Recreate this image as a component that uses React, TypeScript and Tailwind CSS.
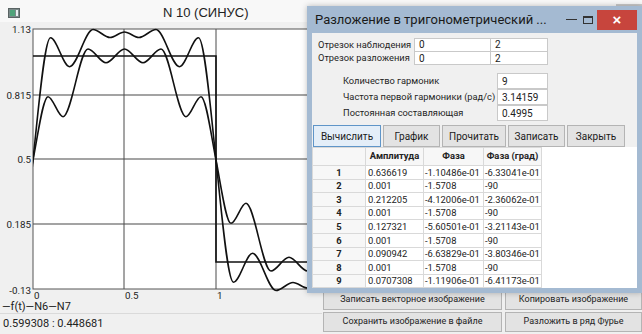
import React from 'react'

type Pt = [number, number, number?]

// monotone cubic through the points, optional tangent multiplier as 3rd value
function smoothPath(pts: Pt[]) {
  const n = pts.length
  const h: number[] = []
  const d: number[] = []
  for (let i = 0; i < n - 1; i++) {
    h[i] = pts[i + 1][0] - pts[i][0]
    d[i] = (pts[i + 1][1] - pts[i][1]) / h[i]
  }
  const m: number[] = []
  for (let i = 0; i < n; i++) {
    if (i === 0) m[i] = d[0]
    else if (i === n - 1) m[i] = d[n - 2]
    else if (d[i - 1] * d[i] <= 0) m[i] = 0
    else {
      const w1 = 2 * h[i] + h[i - 1]
      const w2 = h[i] + 2 * h[i - 1]
      m[i] = (w1 + w2) / (w1 / d[i - 1] + w2 / d[i])
    }
    m[i] *= pts[i][2] ?? 1
  }
  let s = `M${pts[0][0]},${pts[0][1]}`
  for (let i = 0; i < n - 1; i++) {
    const [x0, y0] = pts[i]
    const [x1, y1] = pts[i + 1]
    s += ` C${x0 + h[i] / 3},${y0 + (m[i] * h[i]) / 3} ${x1 - h[i] / 3},${y1 - (m[i + 1] * h[i]) / 3} ${x1},${y1}`
  }
  return s
}

// half period (t from 0 to 1) -> mirrored on both sides around the zero crossings
function extend(half: Pt[]): Pt[] {
  const left = half
    .slice(1, 4)
    .reverse()
    .map(([x, y, k]) => [66 - x, 320 - y, k] as Pt)
  const right = half
    .slice(0, -1)
    .reverse()
    .map(([x, y, k]) => [432 - x, 320 - y, k] as Pt)
  return [...left, ...half, ...right]
}

const N7: Pt[] = [
  [33, 160, 1.35],
  [50.5, 37.8],
  [69.5, 66.7],
  [93, 29.5],
  [110, 37.5],
  [124.5, 32],
  [139, 37.5],
  [156, 29.5],
  [179.5, 66.7],
  [198.5, 37.8],
  [216, 160, 1.35],
]

const N6: Pt[] = [
  [33, 160, 1.2],
  [48, 96.7],
  [63, 116.7],
  [88, 49],
  [106, 62.7],
  [124.5, 49],
  [143, 62.7],
  [161, 49],
  [186, 116.7],
  [201, 96.7],
  [216, 160, 1.2],
]

const yLabels = [
  { y: 29, t: '1.13' },
  { y: 95, t: '0.815' },
  { y: 159, t: '0.5' },
  { y: 224, t: '0.185' },
  { y: 290, t: '-0.13' },
]

const rows = [
  ['1', '0.636619', '-1.10486e-01', '-6.33041e-01'],
  ['2', '0.001', '-1.5708', '-90'],
  ['3', '0.212205', '-4.12006e-01', '-2.36062e-01'],
  ['4', '0.001', '-1.5708', '-90'],
  ['5', '0.127321', '-5.60501e-01', '-3.21143e-01'],
  ['6', '0.001', '-1.5708', '-90'],
  ['7', '0.090942', '-6.63829e-01', '-3.80346e-01'],
  ['8', '0.001', '-1.5708', '-90'],
  ['9', '0.0707308', '-1.11906e-01', '-6.41173e-01'],
]

function Chart() {
  return (
    <svg viewBox="0 22 322 279" className="block h-[279px] w-[322px] shrink-0">
      <defs>
        <clipPath id="plot">
          <rect x="33" y="28" width="300" height="264" />
        </clipPath>
      </defs>
      <rect x="33" y="29" width="300" height="260" fill="#ffffff" />
      {[95, 159, 224].map((y) => (
        <line key={y} x1="33" x2="333" y1={y} y2={y} stroke="#858585" strokeWidth="1.4" />
      ))}
      {[124, 216].map((x) => (
        <line key={x} x1={x} x2={x} y1="29" y2="289" stroke="#4a4a4a" strokeWidth="1" />
      ))}
      <rect x="33" y="29" width="300" height="260" fill="none" stroke="#555" strokeWidth="1" />
      <g clipPath="url(#plot)" fill="none" stroke="#111" strokeWidth="1.6">
        <path d="M33,56 H216 V262 H333" />
        <path d={smoothPath(extend(N7))} />
        <path d={smoothPath(extend(N6))} />
      </g>
      <g fontFamily="Roboto, sans-serif" fontSize="9.8" fill="#222">
        {yLabels.map((l) => (
          <text key={l.t} x="31" y={l.y + 3.5} textAnchor="end">
            {l.t}
          </text>
        ))}
        <text x="34" y="299">0</text>
        <text x="125" y="299">0.5</text>
        <text x="217" y="299">1</text>
      </g>
    </svg>
  )
}

function Field({ value, className }: { value: string; className: string }) {
  return (
    <div className={`flex items-center border border-[#c9c9c9] bg-white pl-[4px] text-[10px] text-[#222] ${className}`}>
      {value}
    </div>
  )
}

function Btn({ label, active }: { label: string; active?: boolean }) {
  return (
    <div
      className={`flex h-[22px] items-center justify-center whitespace-nowrap border text-[10px] text-[#1b1b1b] ${
        active ? 'border-[#5f95c8] bg-[#e4eef8]' : 'border-[#b4b4b4] bg-[#e3e3e3]'
      }`}
    >
      {label}
    </div>
  )
}

function Dialog() {
  return (
    <div className="absolute left-[307px] top-[6px] flex h-[287px] w-[335px] flex-col bg-[#a4bad2] px-[5px] pb-[5px] shadow-[0_0_6px_rgba(0,0,0,0.25)]">
      <div className="flex h-[27px] shrink-0 items-center">
        <span className="ml-[3px] whitespace-nowrap text-[13px] text-[#1a1a1a]">Разложение в тригонометрический ...</span>
        <div className="ml-auto flex items-center">
          <div className="mr-[6px] h-[1px] w-[11px] bg-[#333]" />
          <div className="mr-[4px] h-[8px] w-[10px] border border-t-[2px] border-[#333]" />
          <div className="flex h-[20px] w-[40px] items-center justify-center bg-[#c7453d] font-['Liberation_Sans',sans-serif] text-[15px] font-bold leading-none text-white">
            ×
          </div>
        </div>
      </div>
      <div className="flex min-h-0 flex-1 flex-col overflow-hidden bg-[#f0f0f0] text-[#1e1e1e]">
        <div className="flex flex-col pt-[5px]">
          {[
            ['Отрезок наблюдения', '0', '2'],
            ['Отрезок разложения', '0', '2'],
          ].map(([label, a, b]) => (
            <div key={label} className="flex h-[13.5px] items-center">
              <span className="w-[102px] whitespace-nowrap pl-[6px] text-[9.3px]">{label}</span>
              <Field value={a} className="h-[14px] w-[77px]" />
              <Field value={b} className="-ml-px h-[14px] w-[58px]" />
            </div>
          ))}
        </div>
        <div className="mt-[8px] flex flex-col">
          {[
            ['Количество гармоник', '9'],
            ['Частота первой гармоники (рад/с)', '3.14159'],
            ['Постоянная составляющая', '0.4995'],
          ].map(([label, v]) => (
            <div key={label} className="flex h-[16px] items-center">
              <span className="w-[185px] whitespace-nowrap pl-[31px] text-[9.3px]">{label}</span>
              <Field value={v} className="h-[16px] w-[51px]" />
            </div>
          ))}
        </div>
        <div className="mt-[4px] flex gap-[2px] pl-[1px]">
          <div className="w-[68px]">
            <Btn label="Вычислить" active />
          </div>
          <div className="w-[57px]">
            <Btn label="График" />
          </div>
          <div className="w-[64px]">
            <Btn label="Прочитать" />
          </div>
          <div className="w-[57px]">
            <Btn label="Записать" />
          </div>
          <div className="w-[58px]">
            <Btn label="Закрыть" />
          </div>
        </div>
        <div className="flex-1 bg-white">
          <table className="w-[229px] table-fixed border-collapse whitespace-nowrap text-[9.4px] text-[#222]">
            <colgroup>
              <col className="w-[53px]" />
              <col className="w-[58px]" />
              <col className="w-[60px]" />
              <col className="w-[58px]" />
            </colgroup>
            <thead>
              <tr className="h-[18px]">
                <th className="border border-[#d9d9d9] bg-[#f7f7f7]" />
                <th className="overflow-hidden border border-[#d9d9d9] bg-[#f7f7f7] font-bold">Амплитуда</th>
                <th className="overflow-hidden border border-[#d9d9d9] bg-[#f7f7f7] font-bold">Фаза</th>
                <th className="overflow-hidden border border-[#d9d9d9] bg-[#f7f7f7] font-bold">Фаза (град)</th>
              </tr>
            </thead>
            <tbody>
              {rows.map((r) => (
                <tr key={r[0]} className="h-[13.6px] leading-none">
                  <td className="border border-[#d9d9d9] bg-[#f7f7f7] text-center font-bold">{r[0]}</td>
                  <td className="overflow-hidden border border-[#d9d9d9] pl-[2px]">{r[1]}</td>
                  <td className="overflow-hidden border border-[#d9d9d9] pl-[1px]">{r[2]}</td>
                  <td className="overflow-hidden border border-[#d9d9d9] pl-[1px]">{r[3]}</td>
                </tr>
              ))}
            </tbody>
          </table>
        </div>
      </div>
    </div>
  )
}

export default function App() {
  return (
    <div className="relative h-[334px] w-[642px] overflow-hidden bg-[#f0f0f0] font-['Roboto',sans-serif]">
      <div className="flex h-full flex-col">
        <div className="flex h-[22px] shrink-0 items-center bg-[#f8f8f8] pt-[4px]">
          <svg viewBox="0 0 12 10" className="ml-[8px] h-[10px] w-[12px]">
            <rect x="0.5" y="0.5" width="11" height="9" fill="#7b8a8a" stroke="#5a6464" />
            <rect x="2" y="2" width="5" height="6" fill="#4fa37a" />
            <rect x="8" y="2" width="2" height="6" fill="#e8eef0" />
          </svg>
          <span className="ml-[143px] font-['Liberation_Sans',sans-serif] text-[13px] text-[#222]">N 10 (СИНУС)</span>
          <div className="ml-auto h-[18px] w-[26px] self-start bg-[#c9c9c9]" />
        </div>
        <div className="flex min-h-0 flex-1">
          <div className="flex w-[322px] flex-col">
            <Chart />
            <div className="h-[12px] pl-[2px] text-[11px] leading-[12px] text-[#222]">—f(t)—N6—N7</div>
            <div className="flex flex-1 items-center border-t border-[#dadada] pl-[3px] text-[11px] text-[#222]">
              0.599308 : 0.448681
            </div>
          </div>
          <div className="flex flex-1 flex-col justify-end pb-[2px] pl-[1px]">
            <div className="grid grid-cols-[179px_1fr] gap-x-[3px] gap-y-[2px] text-[9px] text-[#222]">
              {['Записать векторное изображение', 'Копировать изображение', 'Сохранить изображение в файле', 'Разложить в ряд Фурье'].map(
                (t) => (
                  <div key={t} className="flex h-[20px] items-center justify-center whitespace-nowrap border border-[#b4b4b4] bg-[#e3e3e3]">
                    {t}
                  </div>
                ),
              )}
            </div>
          </div>
        </div>
      </div>
      <Dialog />
    </div>
  )
}
